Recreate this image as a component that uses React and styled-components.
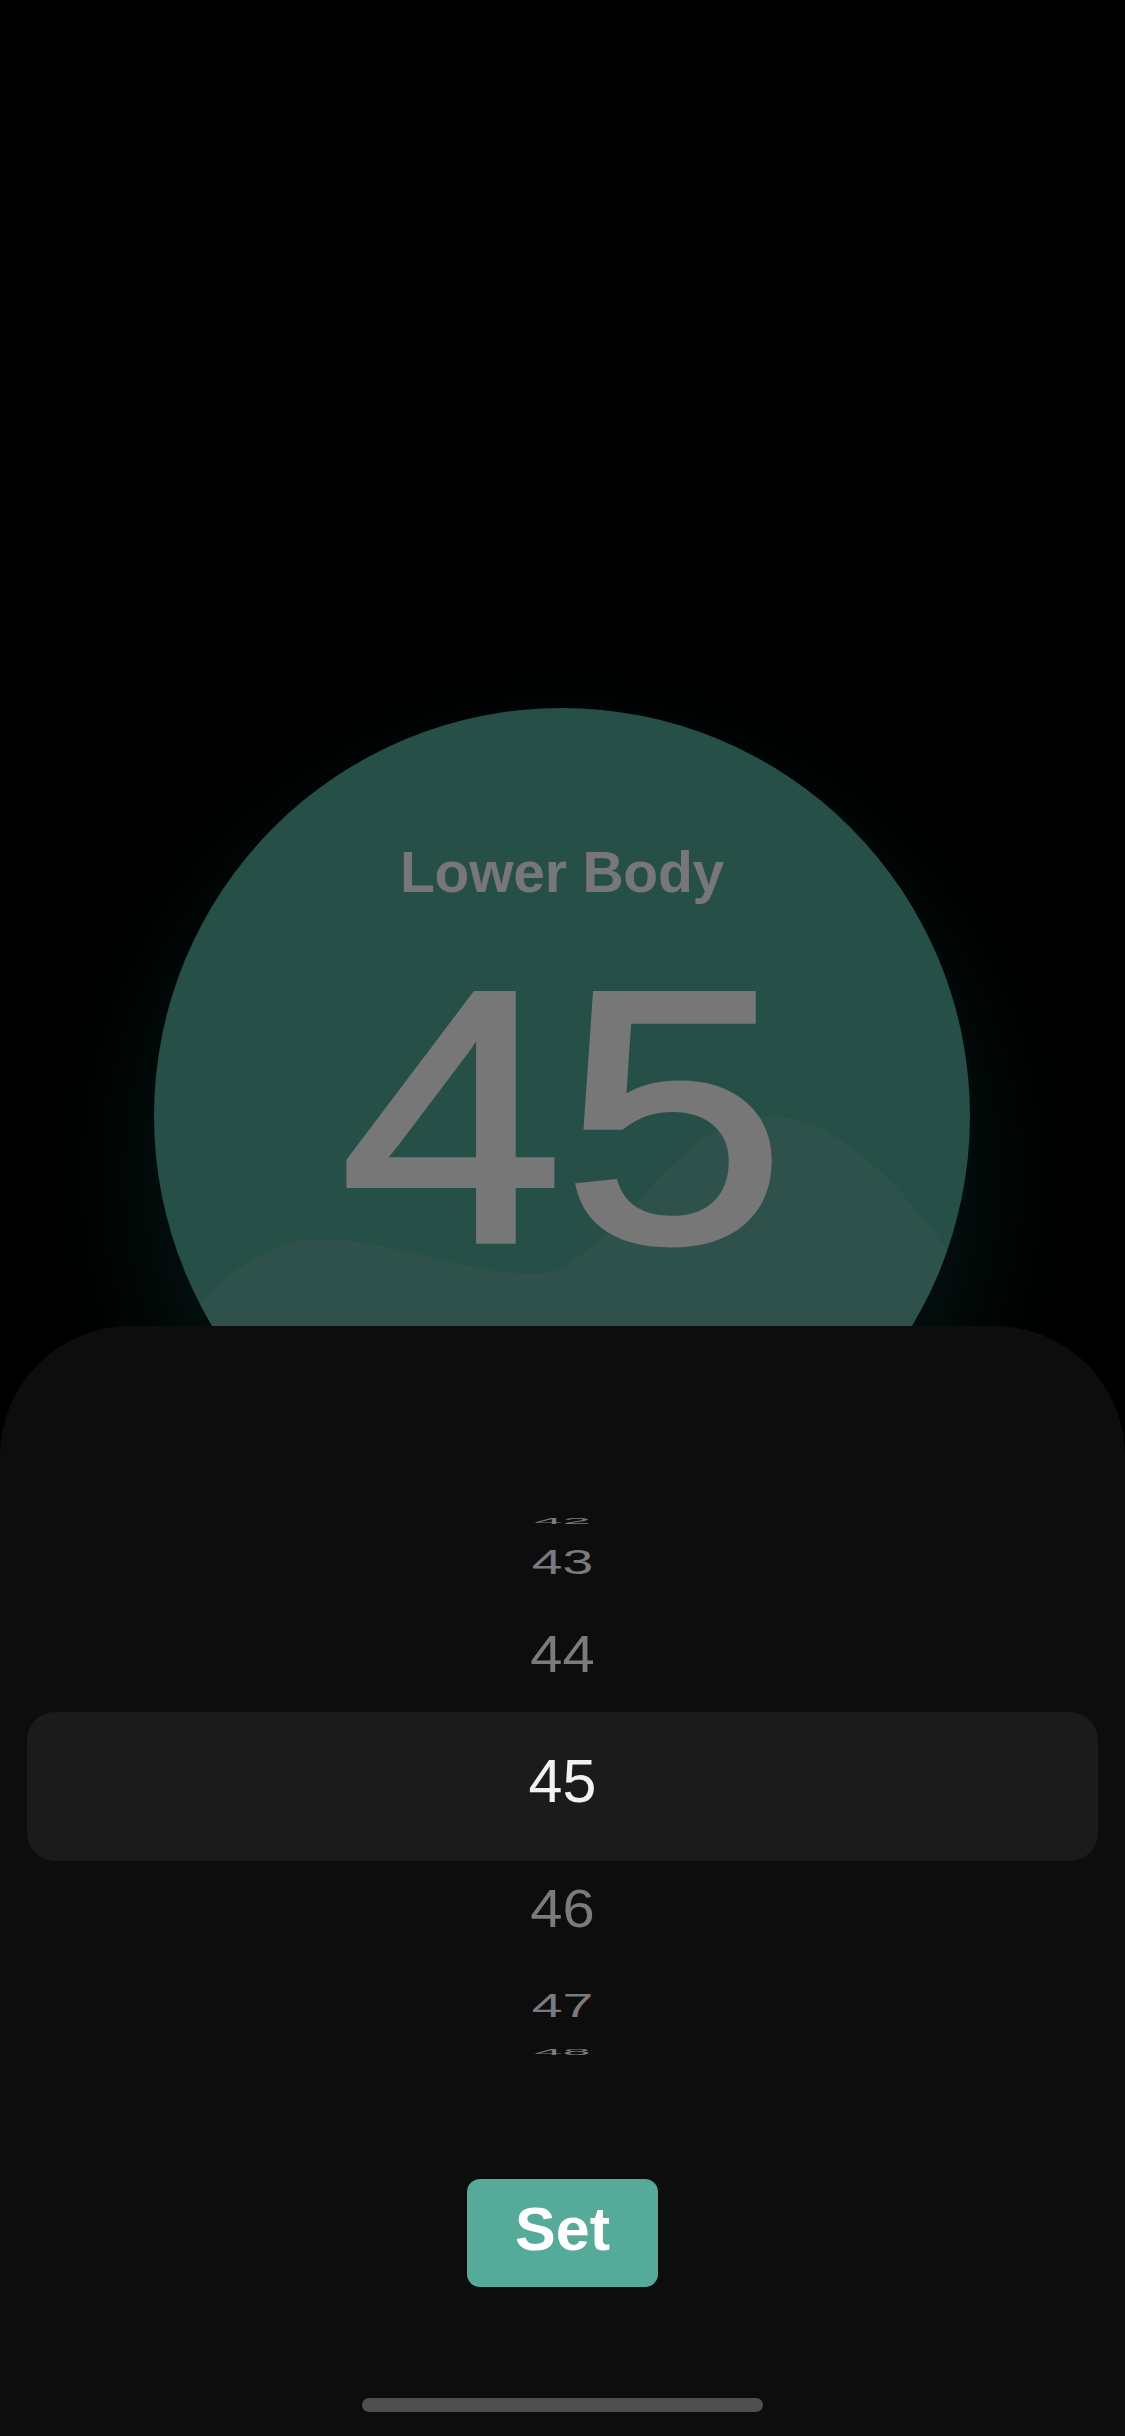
import React from "react";
import styled, { createGlobalStyle } from "styled-components";

const Global = createGlobalStyle`
  html, body {
    margin: 0;
    padding: 0;
    background: #000;
  }
  body {
    font-family: "Liberation Sans", Arial, sans-serif;
    overflow: hidden;
  }
`;

const Screen = styled.div`
  width: 1125px;
  height: 2436px;
  background: #000;
  display: flex;
  flex-direction: column;
  overflow: hidden;
`;

const Hero = styled.section`
  height: 1326px;
  flex: 0 0 auto;
  display: flex;
  justify-content: center;
  padding-top: 708px;
  box-sizing: border-box;
`;

const Dial = styled.div`
  position: relative;
  width: 816px;
  height: 816px;
  flex: 0 0 auto;
  margin-left: -1px;
  border-radius: 50%;
  background: #264f47;
  box-shadow: 0 60px 110px 20px rgba(8, 38, 32, 0.5);
  overflow: hidden;
  display: flex;
  flex-direction: column;
  align-items: center;
  padding-top: 136px;
  box-sizing: border-box;
`;

const Wave = styled.svg`
  position: absolute;
  left: 0;
  top: 0;
  width: 816px;
  height: 816px;
`;

const Label = styled.div`
  position: relative;
  font-size: 57px;
  line-height: 1;
  font-weight: 700;
  color: #777777;
  letter-spacing: -0.2px;
`;

const BigNumber = styled.div`
  position: relative;
  margin-top: 36px;
  font-size: 372px;
  line-height: 1;
  font-weight: 400;
  color: #777777;
  -webkit-text-stroke: 6px #777777;
  transform: translateX(1px) scale(1.075, 0.965);
  transform-origin: center top;
`;

const Sheet = styled.section`
  position: relative;
  z-index: 1;
  flex: 1 1 auto;
  background: #0d0d0d;
  border-radius: 130px 130px 0 0;
  display: flex;
  flex-direction: column;
  align-items: center;
  padding: 146px 27px 0;
  box-sizing: border-box;
`;

const Wheel = styled.div`
  position: relative;
  width: 100%;
  height: 620px;
`;

const Highlight = styled.div`
  position: absolute;
  left: 0;
  right: 0;
  top: 240px;
  height: 149px;
  border-radius: 28px;
  background: #1b1b1b;
`;

const Item = styled.div`
  position: absolute;
  left: 0;
  right: 0;
  top: 279px;
  height: 61px;
  text-align: center;
  font-size: 61px;
  line-height: 1;
  color: ${(p) => (p.$selected ? "#f2f2f2" : "#7b7b7b")};
  transform-origin: center center;
`;

const SetButton = styled.button`
  margin-top: 87px;
  width: 191px;
  height: 108px;
  border: none;
  border-radius: 13px;
  background: #55aa9a;
  color: #ffffff;
  font-family: "Liberation Sans", Arial, sans-serif;
  font-weight: 700;
  font-size: 61px;
  line-height: 1;
  padding: 0 0 7px;
  display: flex;
  align-items: center;
  justify-content: center;
  cursor: pointer;
`;

const HomeIndicator = styled.div`
  margin-top: 111px;
  width: 401px;
  height: 14px;
  border-radius: 7px;
  background: #4f4f4f;
`;

const items = [
  { value: 42, dy: -261, sx: 0.83, sy: 0.15 },
  { value: 43, dy: -219, sx: 0.905, sy: 0.57 },
  { value: 44, dy: -127, sx: 0.95, sy: 0.86 },
  { value: 45, dy: 0, sx: 1, sy: 1, selected: true },
  { value: 46, dy: 127, sx: 0.95, sy: 0.88 },
  { value: 47, dy: 224, sx: 0.905, sy: 0.55 },
  { value: 48, dy: 270, sx: 0.83, sy: 0.16 },
];

export default function App() {
  return (
    <Screen>
      <Global />
      <Hero>
        <Dial>
          <Wave viewBox="0 0 816 816">
            <path
              d="M0,650 C40,595 100,531 164,531 C240,531 320,568 383,566 C455,563 520,408 613,408 C690,408 760,490 816,575 L816,816 L0,816 Z"
              fill="#2e524b"
            />
          </Wave>
          <Label>Lower Body</Label>
          <BigNumber>45</BigNumber>
        </Dial>
      </Hero>
      <Sheet>
        <Wheel>
          <Highlight />
          {items.map((it) => (
            <Item
              key={it.value}
              $selected={it.selected}
              style={{
                transform: `translateY(${it.dy}px) scale(${it.sx}, ${it.sy})`,
              }}
            >
              {it.value}
            </Item>
          ))}
        </Wheel>
        <SetButton>Set</SetButton>
        <HomeIndicator />
      </Sheet>
    </Screen>
  );
}
